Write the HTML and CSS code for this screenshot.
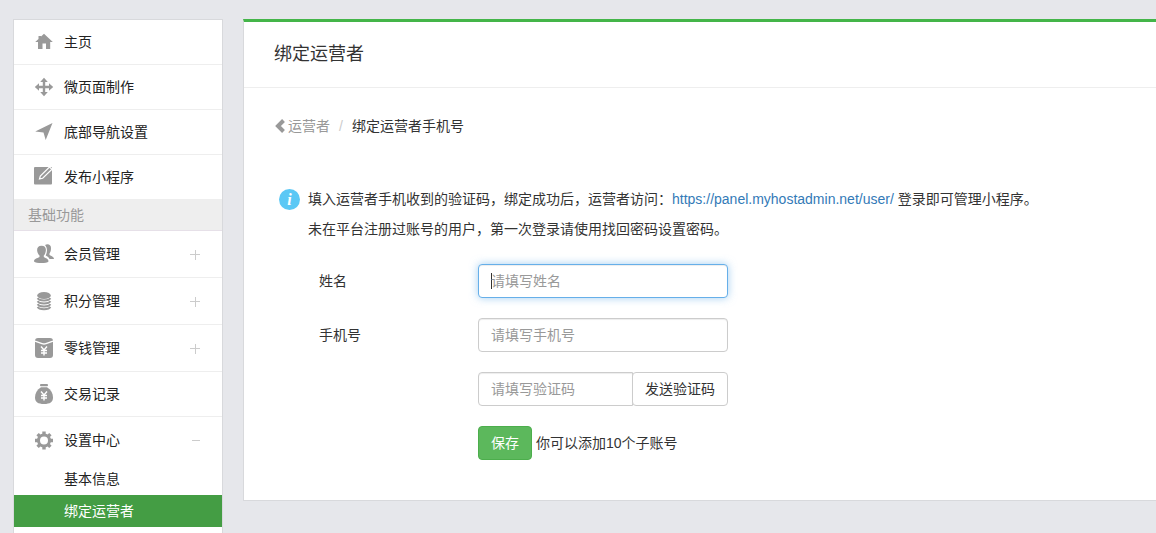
FILE: index.html
```html
<!DOCTYPE html>
<html lang="zh-CN">
<head>
<meta charset="utf-8">
<meta name="viewport" content="width=device-width, initial-scale=1">
<title>绑定运营者</title>
<link rel="stylesheet" href="styles.css">
</head>
<body>
<div class="layout">
  <nav class="sidebar">
    <a class="item" href="#">
      <svg class="icon" viewBox="0 0 20 20"><path d="M10 1.800 18.800 10H16.200V17H12V11.500H8.500V17H4V10H1.200L4.500 7V4H7V4.600Z"/></svg>
      <span>主页</span>
    </a>
    <a class="item" href="#">
      <svg class="icon" viewBox="0 0 20 20"><path d="M10 .8 13.800 5H11.200V8.800H15V6.200L19.200 10 15 13.800V11.200H11.200V15H13.800L10 19.200 6.200 15H8.800V11.200H5V13.800L.8 10 5 6.200V8.800H8.800V5H6.200Z"/></svg>
      <span>微页面制作</span>
    </a>
    <a class="item" href="#">
      <svg class="icon" viewBox="0 0 20 20"><path d="M18.500 1 11.700 18 9.500 10.500 1.200 9.400Z"/></svg>
      <span>底部导航设置</span>
    </a>
    <a class="item" href="#">
      <svg class="icon" viewBox="0 0 20 20"><rect y="0" width="18" height="17.500" rx="1"/><path class="cut" d="M5.500 12 6.300 9 15.500 0 18 2.200 8.700 11.300Z"/></svg>
      <span>发布小程序</span>
    </a>
    <h2 class="group">基础功能</h2>
    <a class="item tall" href="#">
      <svg class="icon" viewBox="0 0 20 20"><path d="M11 1C13.500 -.6 17 .3 17 4 17 6.500 16.500 8 15.500 9.500V11C17 12 20 12.500 20 15H15.500C15 13.500 13.500 12.500 11.700 11.500 13.500 8 13.500 4 11 1Z"/><path d="M7.500 1.800C11 1.800 12.300 4 11.800 7 11.500 8.800 11 10.500 9.800 11.500V13C12 14.500 14.500 14.500 14.500 17.500 13 19.500 2 19.500 0 17.500 0 14.700 3 14.500 5.500 13V11.500C4 10 3.500 8.800 3.200 7 2.800 4 4 1.800 7.500 1.800Z"/></svg>
      <span>会员管理</span>
      <svg class="toggle" viewBox="0 0 11 11"><path d="M0 5.500H10M5.500 1V11"/></svg>
    </a>
    <a class="item tall" href="#">
      <svg class="icon" viewBox="0 0 20 20"><ellipse cx="10" cy="4.500" rx="6.800" ry="3.600"/><path class="ring" d="M3.700 7.200C5 10.300 15 10.300 16.300 7.200M3.700 10.200C5 13.300 15 13.300 16.300 10.200M3.700 13.200C5 16.300 15 16.300 16.300 13.200M3.700 15.800C5 18.900 15 18.900 16.300 15.800"/></svg>
      <span>积分管理</span>
      <svg class="toggle" viewBox="0 0 11 11"><path d="M0 5.500H10M5.500 1V11"/></svg>
    </a>
    <a class="item tall" href="#">
      <svg class="icon" viewBox="0 0 20 20"><rect x="1" width="18" height="20" rx="3"/><path class="line" d="M1 3.200 8 5.600Q10 6.400 12 5.600L19 3.200M7 8.500 10 12 13 8.500M10 12V17.500M7 12.500H13M7 15H13"/></svg>
      <span>零钱管理</span>
      <svg class="toggle" viewBox="0 0 11 11"><path d="M0 5.500H10M5.500 1V11"/></svg>
    </a>
    <a class="item" href="#">
      <svg class="icon" viewBox="0 0 20 20"><rect x="6" width="8" height="2.200" rx="1"/><path d="M7 3.200H13C17 5.500 19 9.500 19 13.500 19 18 16 20 10 20S1 18 1 13.500C1 9.500 3 5.500 7 3.200Z"/><path class="line" d="M7 7.500 10 11 13 7.500M10 11V16.500M7 11.500H13M7 14H13"/></svg>
      <span>交易记录</span>
    </a>
    <section class="submenu">
      <a class="item tall" href="#">
        <svg class="icon" viewBox="0 0 20 20"><circle class="gear" cx="10" cy="10.500" r="5.500"/><path class="teeth" d="M10 1.500V4.500M10 16.500V19.500M1 10.500H4M16 10.500H19M3.600 4.100 5.700 6.200M14.300 14.800 16.400 16.900M3.600 16.900 5.700 14.800M14.300 6.200 16.400 4.100"/></svg>
        <span>设置中心</span>
        <svg class="toggle" viewBox="0 0 11 11"><path d="M2 5.500H10"/></svg>
      </a>
      <a class="sub" href="#">基本信息</a>
      <a class="sub active" href="#" aria-current="page">绑定运营者</a>
    </section>
  </nav>

  <main class="panel">
    <header class="panel-head"><h1>绑定运营者</h1></header>
    <div class="panel-body">
      <nav class="crumbs">
        <a href="#"><svg class="back" viewBox="0 0 12 14"><path d="M9.500 1.500 4 7 9.500 12.500"/></svg>运营者</a>
        <span class="slash">/</span>
        <span>绑定运营者手机号</span>
      </nav>
      <div class="notice">
        <span class="info">i</span>
        <div>
          <p>填入运营者手机收到的验证码，绑定成功后，运营者访问：<a href="https://panel.myhostadmin.net/user/">https://panel.myhostadmin.net/user/</a> 登录即可管理小程序。</p>
          <p>未在平台注册过账号的用户，第一次登录请使用找回密码设置密码。</p>
        </div>
      </div>
      <form class="form">
        <label for="name">姓名</label>
        <input class="field" id="name" type="text" placeholder="请填写姓名" autofocus>
        <label for="phone">手机号</label>
        <input class="field" id="phone" type="tel" placeholder="请填写手机号">
        <div class="code">
          <input class="field" type="text" placeholder="请填写验证码" aria-label="验证码">
          <button class="btn send" type="button">发送验证码</button>
        </div>
        <div class="actions">
          <button class="btn save" type="submit">保存</button>
          <span>你可以添加10个子账号</span>
        </div>
      </form>
    </div>
  </main>
</div>
</body>
</html>
```

FILE: styles.css
```css
* {
  box-sizing: border-box;
}

body {
  margin: 0;
  background: #e6e7eb;
  color: #333;
  font: 14px/20px "Liberation Sans", "Noto Sans CJK SC", sans-serif;
}

h1, h2, p {
  margin: 0;
  font-weight: normal;
}

a {
  color: inherit;
  text-decoration: none;
}

.layout {
  display: flex;
  align-items: flex-start;
  gap: 20px;
  height: 100vh;
  padding: 19px 0 0 13px;
  overflow: hidden;
}

/* Sidebar */
.sidebar {
  flex: 0 0 210px;
  min-height: 100%;
  padding-bottom: 32px;
  border: 1px solid #d8d9dc;
  background: #fff;
  color: #222;
}

.item {
  display: flex;
  align-items: center;
  gap: 10px;
  height: 45px;
  padding: 0 21px 0 20px;
  border-bottom: 1px solid #eee;
}

.item.tall {
  height: 47px;
}

.icon {
  width: 20px;
  height: 20px;
  fill: #999;
}

.icon .cut {
  fill: #999;
  stroke: #fff;
  stroke-width: 1.2;
}

.icon .line {
  fill: none;
  stroke: #fff;
  stroke-width: 1.4;
}

.icon .ring {
  fill: none;
  stroke: #999;
  stroke-width: 2;
}

.icon .gear {
  fill: none;
  stroke: #999;
  stroke-width: 3;
}

.icon .teeth {
  stroke: #999;
  stroke-width: 3.4;
}

.toggle {
  width: 11px;
  height: 11px;
  margin-left: auto;
  fill: none;
  stroke: #ccc;
}

.group {
  height: 32px;
  margin-top: -1px;
  padding: 0 14px;
  border-bottom: 1px solid #e6e0e8;
  background: #eee;
  color: #999;
  font-size: 14px;
  line-height: 32px;
}

.submenu .item {
  height: 46px;
  border-bottom: 0;
}

.sub {
  display: block;
  padding: 0 50px;
  line-height: 32px;
}

.sub.active {
  background: #449d44;
  color: #fff;
}

/* Content panel */
.panel {
  flex: 1;
  min-width: 0;
  border: solid #d8d9dc;
  border-width: 0 0 1px 1px;
  border-top: 3px solid #44b549;
  background: #fff;
}

.panel-head {
  padding: 20px 30px;
  border-bottom: 1px solid #eee;
}

.panel-head h1 {
  font-size: 18px;
  line-height: 25px;
}

.panel-body {
  padding: 28px 30px 40px;
}

.crumbs {
  display: flex;
  gap: 9px;
}

.crumbs a {
  display: flex;
  align-items: center;
  color: #999;
}

.crumbs .slash {
  color: #ccc;
}

.back {
  width: 12px;
  height: 14px;
  margin-right: 2px;
  fill: none;
  stroke: #999;
  stroke-width: 4;
}

.notice {
  display: flex;
  align-items: flex-start;
  gap: 8px;
  margin: 48px 5px 20px;
  line-height: 30px;
}

.info {
  width: 21px;
  height: 21px;
  margin-top: 5px;
  border-radius: 50%;
  background: #5bc8f5;
  color: #fff;
  font: italic bold 16px/21px "Liberation Serif", serif;
  text-align: center;
}

.notice a {
  color: #337ab7;
}

/* Form */
.form {
  display: grid;
  grid-template-columns: 159px 250px;
  gap: 20px 0;
  align-items: center;
  padding-left: 45px;
}

.field {
  width: 100%;
  height: 34px;
  padding: 6px 12px;
  border: 1px solid #ccc;
  border-radius: 4px;
  background: #fff;
  box-shadow: inset 0 1px 1px #00000013;
  color: #555;
  font: inherit;
}

.field::placeholder {
  color: #999;
}

.field:focus {
  border-color: #66afe9;
  outline: 0;
  box-shadow: inset 0 1px 1px #00000013, 0 0 8px #66afe999;
}

/* Steady caret while the focused field is empty */
.field:focus:placeholder-shown {
  background: linear-gradient(#333, #333) 12px center / 1px 16px no-repeat #fff;
  caret-color: transparent;
}

.code,
.actions {
  display: flex;
  grid-column: 2;
}

.code .field {
  flex: 1;
  min-width: 0;
  border-radius: 4px 0 0 4px;
}

.btn {
  flex: none;
  height: 34px;
  padding: 0 12px;
  border: 1px solid #ccc;
  border-radius: 4px;
  background: #fff;
  color: #333;
  font: inherit;
}

.send {
  margin-left: -1px;
}

.actions {
  align-items: center;
  gap: 4px;
}

.save {
  border-color: #4cae4c;
  background: #5cb85c;
  color: #fff;
}
```
